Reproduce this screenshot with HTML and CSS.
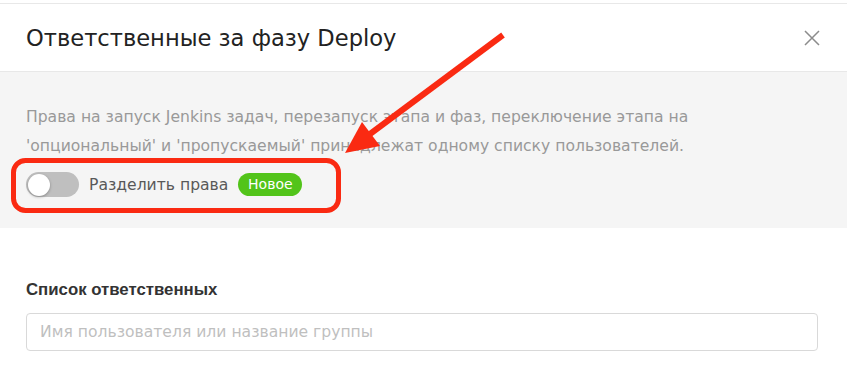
FILE: index.html
```html
<!DOCTYPE html>
<html lang="ru">

<head>
    <meta charset="UTF-8">
    <meta name="viewport" content="width=device-width, initial-scale=1.0">
    <title>Ответственные за фазу Deploy</title>
    <link rel="stylesheet" href="styles.css">
</head>

<body>
    <div class="modal">
        <div class="modal-header">
            <h2 class="modal-title">Ответственные за фазу Deploy</h2>
            <button class="close-button" aria-label="Закрыть">
                <svg width="16" height="16" viewBox="0 0 16 16">
                    <path d="M1 1 L15 15 M15 1 L1 15" stroke="#8c8c8c" stroke-width="1.5" fill="none" />
                </svg>
            </button>
        </div>

        <div class="notice">
            <p class="notice-text">Права на запуск Jenkins задач, перезапуск этапа и фаз, переключение этапа на
                'опциональный' и 'пропускаемый' принадлежат одному списку пользователей.</p>
            <div class="switch-row">
                <span class="switch"><span class="switch-knob"></span></span>
                <span class="switch-label">Разделить права</span>
                <span class="badge-new">Новое</span>
            </div>
        </div>

        <div class="section">
            <div class="section-label">Список ответственных</div>
            <input class="user-input" type="text" placeholder="Имя пользователя или название группы">
        </div>
    </div>

    <!-- пометки поверх скриншота -->
    <svg class="annotation" width="847" height="391" viewBox="0 0 847 391">
        <rect x="13.5" y="160.5" width="325" height="50" rx="12" ry="12" fill="none" stroke="#fa2a12" stroke-width="5" />
        <line x1="503" y1="35" x2="370" y2="134" stroke="#fa2a12" stroke-width="6" />
        <polygon points="345,153 362,122 380,146" fill="#fa2a12" />
    </svg>
</body>

</html>
```

FILE: styles.css
```css
body {
    margin: 0;
    font-family: "DejaVu Sans", "Liberation Sans", sans-serif;
    background-color: #ffffff;
    width: 847px;
    height: 391px;
    overflow: hidden;
}

.modal {
    padding-top: 3px;
}

.modal-header {
    height: 67px;
    border-top: 1px solid #e8e8e8;
    border-bottom: 1px solid #e8e8e8;
    display: flex;
    align-items: center;
    justify-content: space-between;
    padding: 0 26px;
}

.modal-title {
    margin: 0;
    font-size: 22.6px;
    font-weight: normal;
    color: #222222;
}

.close-button {
    border: none;
    background: none;
    padding: 0;
    width: 16px;
    height: 16px;
    margin-right: 1px;
    cursor: pointer;
}

.notice {
    background-color: #f5f5f5;
    padding: 31px 26px 31px 26px;
    height: 94px;
}

.notice-text {
    margin: 0;
    font-size: 15.6px;
    line-height: 29px;
    color: #999999;
    width: 700px;
}

.switch-row {
    display: flex;
    align-items: center;
    margin-top: 11px;
}

.switch {
    width: 53px;
    height: 25px;
    border-radius: 13px;
    background-color: #bfbfbf;
    display: flex;
    align-items: center;
    padding-left: 2px;
    box-sizing: border-box;
}

.switch-knob {
    width: 22px;
    height: 22px;
    border-radius: 50%;
    background-color: #ffffff;
    box-shadow: 0 1px 3px rgba(0, 0, 0, 0.3);
}

.switch-label {
    margin-left: 10px;
    font-size: 15.6px;
    color: #595959;
}

.badge-new {
    margin-left: 10px;
    width: 64px;
    height: 23px;
    line-height: 23px;
    border-radius: 12px;
    background-color: #52c41a;
    color: #ffffff;
    font-size: 14px;
    text-align: center;
}

.section {
    padding: 52px 26px 0 26px;
}

.section-label {
    font-family: "Liberation Sans", Arial, sans-serif;
    font-size: 16.8px;
    font-weight: bold;
    color: #333333;
    line-height: 20px;
}

.user-input {
    display: block;
    margin-top: 13px;
    width: 792px;
    height: 38px;
    box-sizing: border-box;
    border: 1px solid #d9d9d9;
    border-radius: 4px;
    padding: 0 13px;
    font-family: "DejaVu Sans", "Liberation Sans", sans-serif;
    font-size: 15.6px;
    color: #333333;
    outline: none;
}

.user-input::placeholder {
    color: #bfbfbf;
}

.annotation {
    position: absolute;
    top: 0;
    left: 0;
    pointer-events: none;
}
```
